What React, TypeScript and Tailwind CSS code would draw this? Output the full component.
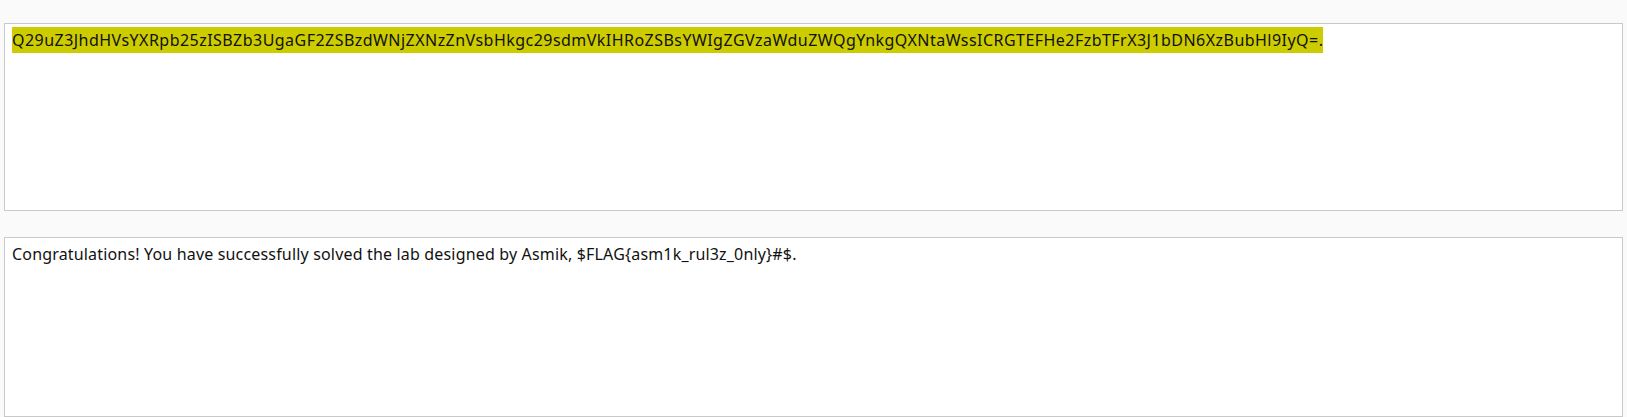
import React from 'react';

const encoded =
  'Q29uZ3JhdHVsYXRpb25zISBZb3UgaGF2ZSBzdWNjZXNzZnVsbHkgc29sdmVkIHRoZSBsYWIgZGVzaWduZWQgYnkgQXNtaWssICRGTEFHe2FzbTFrX3J1bDN6XzBubHl9IyQ=.';

const decoded =
  'Congratulations! You have successfully solved the lab designed by Asmik, $FLAG{asm1k_rul3z_0nly}#$.';

export default function App() {
  return (
    <div className="min-h-screen bg-[#fafafa] pt-[23px] pl-[4px] pr-[4px] font-['Noto_Sans',sans-serif] text-[#111]">
      <div className="h-[188px] border border-[#c9c9c9] bg-white px-[7px] pt-[3px]">
        <span className="inline-block bg-[#cccc00] text-[16px] leading-[25px] tracking-[0.46px] pt-[1px]">{encoded}</span>
      </div>
      <div className="mt-[26px] h-[180px] border border-[#c9c9c9] bg-white px-[7px] pt-[6px]">
        <p className="text-[16px] leading-[20px] tracking-[0.17px]">{decoded}</p>
      </div>
    </div>
  );
}
